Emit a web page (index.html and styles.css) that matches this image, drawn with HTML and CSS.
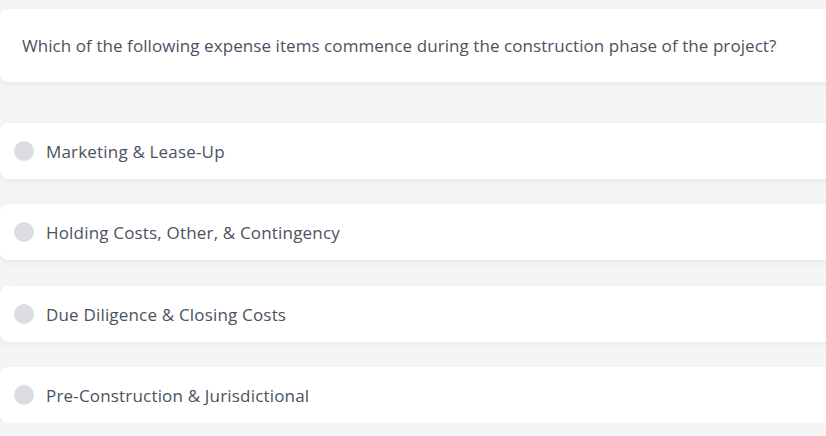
FILE: index.html
```html
<!DOCTYPE html>
<html>
<head>
<meta charset="utf-8">
<link rel="stylesheet" href="styles.css">
</head>
<body>
<div class="quiz">
  <div class="question-card">
    <p class="question-text">Which of the following expense items commence during the construction phase of the project?</p>
  </div>
  <div class="options">
    <label class="option"><span class="radio"></span><span class="option-text">Marketing &amp; Lease-Up</span></label>
    <label class="option"><span class="radio"></span><span class="option-text">Holding Costs, Other, &amp; Contingency</span></label>
    <label class="option"><span class="radio"></span><span class="option-text">Due Diligence &amp; Closing Costs</span></label>
    <label class="option"><span class="radio"></span><span class="option-text">Pre-Construction &amp; Jurisdictional</span></label>
  </div>
</div>
</body>
</html>
```
FILE: styles.css
```css
html, body {
  margin: 0;
  padding: 0;
  background: #f4f5f7;
  overflow: hidden;
}
body {
  font-family: "Open Sans", "Noto Sans", sans-serif;
  color: #4b5260;
}
.quiz {
  width: calc(100% + 20px);
  padding-top: 9px;
}
.question-card {
  background: #ffffff;
  border-radius: 8px;
  height: 73px;
  display: flex;
  align-items: center;
  padding-left: 22px;
  box-shadow: 0 2px 6px rgba(0, 0, 0, 0.06);
}
.question-text {
  margin: 0;
  font-size: 17px;
  letter-spacing: 0.07px;
}
.options {
  margin-top: 41px;
  display: flex;
  flex-direction: column;
  gap: 25.33px;
}
.option {
  background: #ffffff;
  border-radius: 8px;
  height: 56px;
  display: flex;
  align-items: center;
  padding-left: 14px;
  box-shadow: 0 2px 6px rgba(0, 0, 0, 0.06);
}
.radio {
  width: 20px;
  height: 20px;
  border-radius: 50%;
  background: #dcdde1;
  flex: none;
}
.option-text {
  margin-left: 12px;
  font-size: 17px;
  letter-spacing: 0.18px;
  padding-top: 1px;
}
```
